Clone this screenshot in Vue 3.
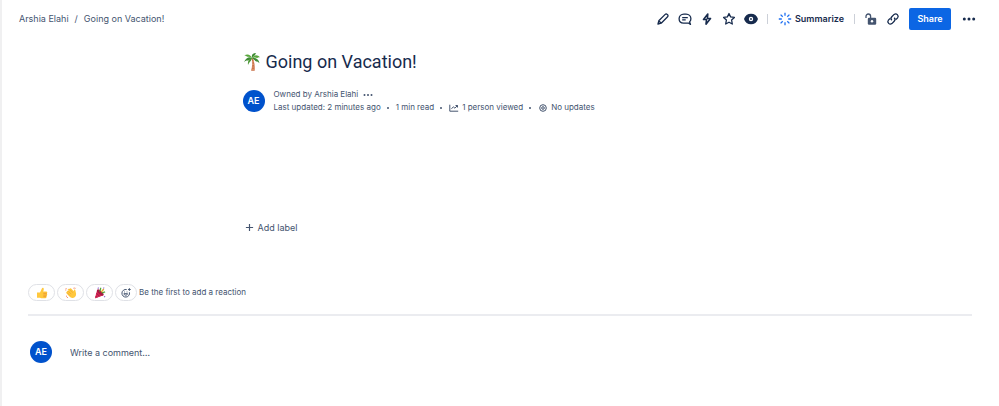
<script setup>
import { ref } from 'vue'

const comment = ref('')
</script>

<template>
  <div class="page">
    <header class="topbar">
      <nav class="crumbs" aria-label="Breadcrumbs">
        <a href="#">Arshia Elahi</a>
        <span>/</span>
        <a href="#">Going on Vacation!</a>
      </nav>
      <div class="tools">
        <button class="icon-btn" aria-label="Edit">
          <svg viewBox="0 0 14 14"><path d="M2 12l.8-3.200 6.400-6.400a1.400 1.400 0 0 1 2 0l.4.4a1.400 1.400 0 0 1 0 2L5.200 11.200zM2.800 8.800l2.400 2.400" /></svg>
        </button>
        <button class="icon-btn" aria-label="Comments">
          <svg viewBox="0 0 14 14"><path d="M10.800 11.200H5.700C2.900 11.200 1.100 9.300 1.100 6.800S3.100 2.200 5.900 2.200h2.200c2.800 0 4.800 2 4.800 4.600 0 1.300-.5 2.300-1.300 3.100l.9 2.500zM4.200 5.600h5.600M4.200 7.900h3.500" /></svg>
        </button>
        <button class="icon-btn" aria-label="Automation">
          <svg viewBox="0 0 14 14"><path class="bold" d="M7.800 2L3.500 7.500h3l-.5 4.700 4.500-5.700H7.400z" /></svg>
        </button>
        <button class="icon-btn" aria-label="Star">
          <svg viewBox="0 0 14 14"><path d="M7 1.500l1.600 3.400 3.800.5-2.800 2.600.7 4L7 10.200 3.700 12l.7-4-2.800-2.600 3.800-.5z" /></svg>
        </button>
        <button class="icon-btn" aria-label="Watch">
          <svg viewBox="0 0 14 14"><path class="solid" d="M0 7C1 3.600 3.700 1.700 7 1.700S13 3.600 14 7c-1 3.400-3.700 5.300-7 5.300S1 10.400 0 7z" /><circle cx="7" cy="7" r="2.200" fill="#fff" stroke="none" /><circle class="solid" cx="7" cy="7" r=".9" /></svg>
        </button>
        <span class="rule"></span>
        <button class="summarize">
          <svg viewBox="0 0 14 14"><path d="M7 .8v3M7 10.200v3M.8 7h3M10.200 7h3M2.600 2.600l2.100 2.100M9.300 9.300l2.100 2.100M11.400 2.600L9.300 4.700M4.700 9.300l-2.100 2.100" /></svg>
          Summarize
        </button>
        <span class="rule"></span>
        <button class="icon-btn lock" aria-label="Restrictions">
          <svg viewBox="0 0 14 14"><path d="M2 6V4.300a2.300 2.300 0 0 1 4.600 0V6" /><rect class="solid" x="3.800" y="5.800" width="8.400" height="7" rx="1.200" /><circle cx="8" cy="9.300" r="1.200" fill="#fff" stroke="none" /></svg>
        </button>
        <button class="icon-btn" aria-label="Copy link">
          <svg viewBox="0 0 14 14"><path d="M5.800 8.200a2.500 2.500 0 0 1 0-3.500l2.300-2.300a2.500 2.500 0 0 1 3.500 3.500L10 7.500M8.200 5.800a2.500 2.500 0 0 1 0 3.500l-2.300 2.300a2.500 2.500 0 0 1-3.500-3.500L4 6.500" /></svg>
        </button>
        <button class="share">Share</button>
        <button class="icon-btn" aria-label="More actions">
          <svg viewBox="0 0 14 14"><g class="dots"><circle cx="2.300" cy="7" r="1.500" /><circle cx="7" cy="7" r="1.500" /><circle cx="11.700" cy="7" r="1.500" /></g></svg>
        </button>
      </div>
    </header>

    <main>
      <article>
        <div class="heading">
          <svg class="palm" viewBox="0 0 18 20" aria-hidden="true">
            <path d="M8.500 6.500c1.200 3.500 1 8-.4 12.200l3.600.1C12 14 11.300 9.500 9.900 6z" fill="#c9714a" />
            <path d="M8.900 10l2.100-.5M9 12.500l2.500-.3M8.700 15l2.900.1M8.400 17.300l3.300.1" stroke="#e9a377" stroke-width=".7" />
            <path d="M9 6C6.500 4.300 3 5.500 1 10.200c2-1.800 3.200-1.800 3.900-1.600C6.500 8 8 7.200 9 6z" fill="#3f8b35" />
            <path d="M9 6C7 5.700 4.500 8 5 13c1.300-3.300 3.300-3.500 4-7z" fill="#4e9a38" />
            <path d="M9 6C7.500 2.500 4.200 1.300 1 3.900c1.800-.2 2.300.2 3 .9 1.800-.3 3.400.2 5 1.200z" fill="#5aa83e" />
            <path d="M9 6C8.300 3 9.500 1 13.200 1c-1 .7-1 1.200-1 2C11 3.500 10 4.500 9 6z" fill="#3f8b35" />
            <path d="M9 6c1.800-3.300 5.300-4 8.200-.6-1.600-.4-2.300 0-2.900.6C12.500 5.200 11 5.300 9 6z" fill="#5aa83e" />
            <path d="M9 6c3-.7 6.500.7 7.500 5.300-1.300-1.700-2.200-2-3.300-1.900C11.800 8.500 10.500 7.300 9 6z" fill="#3f8b35" />
          </svg>
          <h1>Going on Vacation!</h1>
        </div>
        <div class="byline">
          <span class="avatar">AE</span>
          <div class="meta">
            <div class="line">
              <span>Owned by <a href="#">Arshia Elahi</a></span>
              <button class="owner-more" aria-label="Manage owner">
                <svg viewBox="0 0 10 10"><g class="dots"><circle cx="1.500" cy="5" r="1" /><circle cx="5" cy="5" r="1" /><circle cx="8.500" cy="5" r="1" /></g></svg>
              </button>
            </div>
            <div class="line">
              <a href="#">Last updated: 2 minutes ago</a>
              <i class="dot"></i>
              <span>1 min read</span>
              <i class="dot"></i>
              <a href="#" class="with-icon">
                <svg viewBox="0 0 10 10"><path d="M.8 1.700v6.500h8.400M2.500 5.800l1.900-2 1.500 1.400 2.600-2.700M6.500 2.500h2v2" /></svg>
                1 person viewed
              </a>
              <i class="dot"></i>
              <span class="with-icon">
                <svg viewBox="0 0 10 10"><circle cx="5" cy="5" r="3.300" /><circle cx="5" cy="5" r="1.300" /></svg>
                No updates
              </span>
            </div>
          </div>
        </div>
        <button class="add-label">
          <svg viewBox="0 0 10 10"><path d="M5 1v8M1 5h8" /></svg>
          Add label
        </button>
      </article>

      <footer>
        <div class="reactions">
          <button class="pill" aria-label="Thumbs up">
            <svg viewBox="0 0 12 12"><path d="M1 5.500h3L6 1.200C6.200.3 7.800.4 7.800 2c0 1-.3 1.800-.6 2.600h3c1.200 0 1.400 1.500.6 1.900.7.400.6 1.400-.1 1.700.5.500.3 1.300-.3 1.500.3.700-.1 1.500-1 1.500H5.200L4 10.800H1z" fill="#ffc83d" /><path d="M7.300 6.300h3.500M7.300 8.100h3.300M7.300 9.700H10" stroke="#e58b2f" stroke-width=".7" /></svg>
          </button>
          <button class="pill" aria-label="Clapping hands">
            <svg viewBox="0 0 12 12"><path d="M2 4.200c.6-.8 1.100-.4 1.500 0L3 2.600c0-1 1-1.200 1.500-.5l.4-.5c.6-.6 1.200-.2 1.500.2l2.300 2.400.2-1.200c.3-.8 1.500-.5 1.500.4l.7 3.300c.2 2.200-1.100 4-3.200 4.300-1.500.200-2.500-.4-3.500-1.400L1.600 6.400c-.5-.5-.4-1 .1-1.300z" fill="#ffc83d" /><path d="M3.300 4.200l3 3M4.700 2.400l3.100 3.300M2.200 5.700L5 8.500" stroke="#e99a2e" stroke-width=".6" /><path d="M.8 1.200l1 1M.3 3h.9M9.200.5l-.5 1M10.500.9l-.7.900M1 9.500l1-.6M2 11l.8-.9" stroke="#f0653a" stroke-width=".8" /></svg>
          </button>
          <button class="pill" aria-label="Celebrate">
            <svg viewBox="0 0 12 12"><path d="M3.200 2.700L1 10.700c0 .4.300.6.600.5l7.800-3z" fill="#d9244f" /><path d="M2.400 6.200l3.400 3.400M1.500 9l1.600 1.600" stroke="#8b1d50" stroke-width=".8" /><ellipse cx="6.300" cy="5.500" rx="1.700" ry="4.200" transform="rotate(-48 6.300 5.500)" fill="#a71945" /><path d="M6 4.500C5.500 3 7.300 2.600 6.500.8M8 6c1-1.300 1.800-.2 3-1.200" stroke="#54a53a" fill="none" /><path d="M7.300 5l2.500-3" stroke="#e7a72f" /><path d="M3.800.7l.8.8M9.300.8l.9.500M10.200 9.300l.8.800" stroke="#8f65d2" /></svg>
          </button>
          <button class="pill pick" aria-label="Add reaction">
            <svg viewBox="0 0 12 12"><path d="M9.400 5.300A3.800 3.800 0 1 1 6.700 2.600M3.900 6.700c.4 2 3.300 2 3.700 0zM9.400 1.200v2.600M8.100 2.500h2.600M4.500 4.600v.8M7 4.600v.8" /></svg>
          </button>
          <span>Be the first to add a reaction</span>
        </div>
        <form class="comment" @submit.prevent>
          <span class="avatar">AE</span>
          <input v-model="comment" type="text" aria-label="Write a comment" placeholder="Write a comment…" />
        </form>
      </footer>
    </main>
  </div>
</template>

<style>
body {
  background: #fff;
}
</style>

<style scoped>
* {
  box-sizing: border-box;
}
.page {
  min-height: 100vh;
  border-left: 2px solid #f0f0f1;
  font: 8px/13px Inter, "Liberation Sans", sans-serif;
  color: #44546f;
}
button,
input {
  margin: 0;
  padding: 0;
  border: 0;
  background: none;
  font: inherit;
  color: inherit;
}
button {
  display: flex;
  align-items: center;
  justify-content: center;
  cursor: pointer;
}
a {
  color: inherit;
  text-decoration: none;
}
svg {
  display: block;
  flex: none;
  fill: none;
  stroke: currentColor;
  stroke-width: 1.3;
  stroke-linejoin: round;
}
.bold {
  stroke-width: 1.6;
}
.solid,
.dots {
  fill: currentColor;
  stroke: none;
}
.topbar {
  display: flex;
  align-items: center;
  justify-content: space-between;
  padding: 8px 19px 7px 17px;
  line-height: 14px;
}
.crumbs {
  display: flex;
  gap: 6px;
  font-size: 9px;
}
.tools {
  display: flex;
  align-items: center;
  color: #172b4d;
}
.icon-btn {
  width: 22px;
  height: 22px;
}
.icon-btn svg {
  width: 14px;
  height: 14px;
}
.rule {
  width: 1px;
  height: 10px;
  margin: 0 5px;
  background: #ccd0d8;
}
.summarize {
  gap: 3px;
  margin: 0 5px;
  font-size: 9px;
  font-weight: 600;
}
.summarize svg {
  width: 14px;
  height: 14px;
  color: #1d6ff2;
}
.lock {
  color: #44546f;
}
.share {
  min-width: 42px;
  height: 22px;
  margin: 0 7px 0 5px;
  padding: 0 8px;
  border-radius: 2px;
  background: #0c66e4;
  color: #fff;
  font-size: 9px;
  font-weight: 600;
}
article {
  max-width: 516px;
  margin: 0 auto;
  padding-top: 12px;
}
.heading {
  display: flex;
  align-items: center;
  gap: 5px;
}
.palm {
  width: 18px;
  height: 20px;
  stroke: none;
}
h1 {
  margin: 0;
  font: 400 18px/26px Roboto, "Liberation Sans", sans-serif;
  color: #172b4d;
}
.byline {
  display: flex;
  align-items: center;
  gap: 9px;
  margin-top: 13px;
}
.avatar {
  flex: none;
  width: 22px;
  border-radius: 50%;
  background: #0052cc;
  color: #fff;
  font-size: 9px;
  line-height: 22px;
  font-weight: 600;
  text-align: center;
}
.line {
  display: flex;
  align-items: center;
}
.owner-more {
  margin-left: 5px;
}
.line svg {
  width: 10px;
  height: 10px;
  stroke-width: 1;
}
.dot {
  width: 2px;
  height: 2px;
  margin: 0 7px 0 6px;
  border-radius: 50%;
  background: #44546f;
}
.with-icon {
  display: flex;
  align-items: center;
  gap: 3px;
}
.add-label {
  gap: 4px;
  margin: 107px 0 0 2px;
  font-size: 9px;
}
.add-label svg {
  width: 9px;
  height: 9px;
}
footer {
  padding: 50px 27px 0 26px;
}
.reactions {
  display: flex;
  align-items: center;
  gap: 2px;
  padding-bottom: 13px;
  border-bottom: 2px solid #ebecf0;
}
.pill {
  width: 27px;
  height: 17px;
  border: 1px solid #dfe1e6;
  border-radius: 9px;
}
.pill svg {
  width: 12px;
  height: 12px;
  stroke: none;
}
.pick {
  width: 22px;
}
.pick svg {
  stroke: #44546f;
  stroke-width: 1;
}
.comment {
  display: flex;
  align-items: center;
  gap: 18px;
  padding: 25px 0 0 2px;
}
.comment input {
  flex: 1;
  font-size: 9px;
  outline: 0;
}
.comment input::placeholder {
  color: #44546f;
  opacity: 1;
}
</style>
